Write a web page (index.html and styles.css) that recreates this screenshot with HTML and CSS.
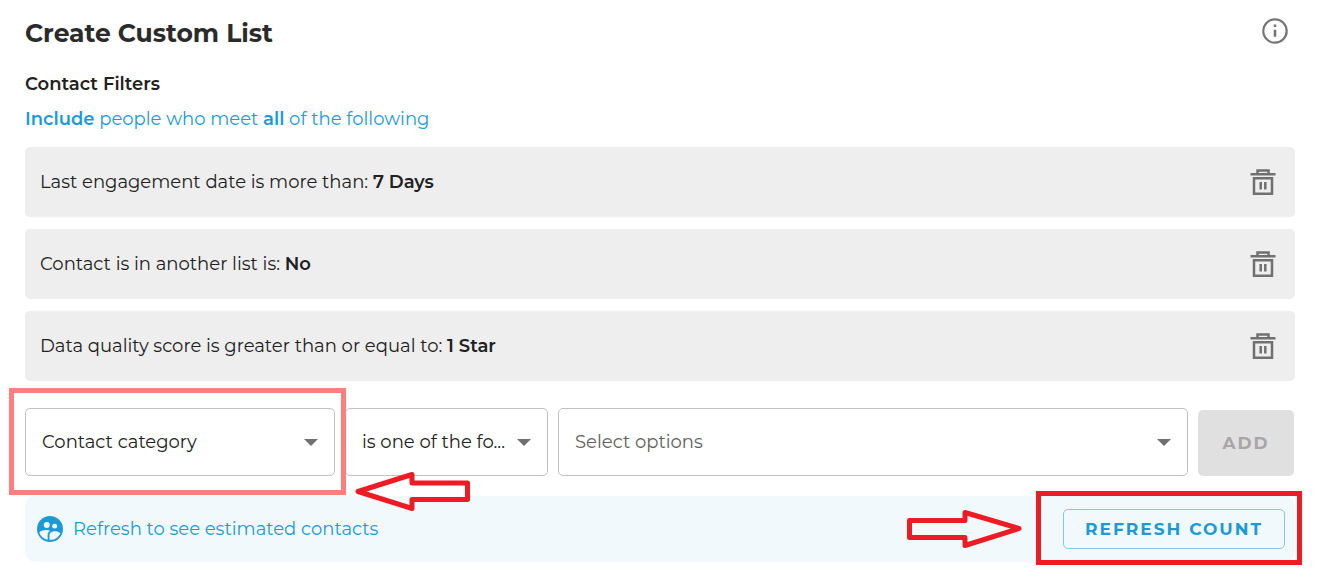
FILE: index.html
```html
<!DOCTYPE html>
<html lang="en">
	<head>
		<meta charset="utf-8" />
		<title>Create Custom List</title>
		<meta name="viewport" content="width=device-width, initial-scale=1" />
		<link rel="stylesheet" href="styles.css">
	</head>
	<body>
		<svg class="symbols" aria-hidden="true">
			<symbol id="trash" viewBox="0 0 26 26">
				<path d="M0.5 5.3H25.5M7.500 5V1.500H18.500V5M4 9.200H22V24.700H4ZM10.700 13V20.500M15.300 13V20.500" fill="none" stroke="#707070" stroke-width="2.5" />
			</symbol>
		</svg>
		<main>
			<header>
				<h1>Create Custom List</h1>
				<button class="icon-button" aria-label="Info">
					<svg width="26" height="26" viewBox="0 0 26 26">
						<circle cx="13" cy="13" r="11.7" fill="none" stroke="#757575" stroke-width="2.2" />
						<path d="M11.7 6.5h2.6v2.6h-2.6zM11.7 11.7h2.6v7h-2.6z" fill="#757575" />
					</svg>
				</button>
			</header>
			<h2>Contact Filters</h2>
			<p class="summary"><strong>Include</strong> people who meet <strong>all</strong> of the following</p>

			<ul class="filters">
				<li>
					<span>Last engagement date is more than: <strong>7 Days</strong></span>
					<button class="icon-button" aria-label="Delete filter"><svg width="26" height="26"><use href="#trash" /></svg></button>
				</li>
				<li>
					<span>Contact is in another list is: <strong>No</strong></span>
					<button class="icon-button" aria-label="Delete filter"><svg width="26" height="26"><use href="#trash" /></svg></button>
				</li>
				<li>
					<span>Data quality score is greater than or equal to: <strong>1 Star</strong></span>
					<button class="icon-button" aria-label="Delete filter"><svg width="26" height="26"><use href="#trash" /></svg></button>
				</li>
			</ul>

			<form class="builder">
				<div class="field">
					<select aria-label="Filter">
						<option>Contact category</option>
					</select>
					<span class="caret"></span>
					<span class="mark mark-category"></span>
					<svg class="arrow arrow-left" width="116" height="40" viewBox="0 0 116 40">
						<path d="M3 20.500L57 3.500V12H112.500V28.500H57V37.500Z" />
					</svg>
				</div>
				<div class="field">
					<select aria-label="Condition">
						<option>is one of the fo...</option>
					</select>
					<span class="caret"></span>
				</div>
				<div class="field options">
					<select aria-label="Options">
						<option>Select options</option>
					</select>
					<span class="caret"></span>
				</div>
				<button class="add" type="button" disabled>ADD</button>
			</form>

			<div class="estimate">
				<svg width="26" height="26" viewBox="2 2 20 20">
					<circle cx="12" cy="12" r="10" fill="#1c9ad6" />
					<g fill="#f1f9fd">
						<circle cx="9.500" cy="9" r="2.300" />
						<circle cx="15.600" cy="9.800" r="1.900" />
						<path d="M3.800 14.500C5.200 13.200 7.600 12.700 9.500 12.800C10.500 12.900 11.400 13.100 12 13.400C10.700 14.300 10.200 15.500 10.200 16.600V20.200C6.900 19.600 4.600 17.500 3.800 14.500Z" />
						<path d="M11.600 20.300V16.700C11.600 14.700 14 13.800 15.700 13.800C17.100 13.800 18.900 14.300 20 15.200C18.800 18.200 15.700 20.500 11.600 20.300Z" />
					</g>
				</svg>
				<span>Refresh to see estimated contacts</span>
				<div class="refresh">
					<button type="button">REFRESH COUNT</button>
					<span class="mark mark-refresh"></span>
					<svg class="arrow arrow-right" width="116" height="40" viewBox="0 0 116 40">
						<path d="M113 19.500L59 3.500V11.500H3.500V28.500H59V36.500Z" />
					</svg>
				</div>
			</div>
		</main>
	</body>
</html>
```

FILE: styles.css
```css
* {
	box-sizing: border-box;
}

body {
	background: #ffffff;
	color: #212121;
	font-family: Montserrat, Inter, sans-serif;
	font-size: 18px;
	line-height: 24px;
	margin: 0;
}

main {
	padding: 16px 28px 16px 25px;
}

strong {
	font-weight: 600;
}

button,
select {
	font: inherit;
}

.symbols {
	display: none;
}

header {
	align-items: flex-start;
	display: flex;
	justify-content: space-between;
	padding: 2px 7px 0 0;
}

h1 {
	color: #2b2b2b;
	font-size: 25px;
	font-weight: 700;
	line-height: 30px;
	margin: 0;
}

h2 {
	font-size: 18px;
	font-weight: 600;
	line-height: 24px;
	margin: 24px 0 0;
}

.icon-button {
	background: none;
	border: 0;
	display: flex;
	padding: 0;
}

.summary {
	color: #1c9ad6;
	margin: 11px 0 16px;
}

.filters {
	display: grid;
	gap: 12px;
	list-style: none;
	margin: 0;
	padding: 0;
}

.filters li {
	align-items: center;
	background: #eeeeee;
	border-radius: 5px;
	display: flex;
	height: 70px;
	justify-content: space-between;
	padding: 0 19px 0 15px;
}

.builder {
	display: grid;
	gap: 10px;
	grid-template-columns: 310px 203px 1fr 96px;
	margin: 27px 1px 20px 0;
}

.field {
	position: relative;
}

.field select {
	appearance: none;
	background: #ffffff;
	border: 1px solid #c0c0c0;
	border-radius: 5px;
	color: inherit;
	height: 68px;
	padding: 0 16px;
	width: 100%;
}

.options select {
	color: #616161;
}

.caret {
	border: 7px solid transparent;
	border-bottom: 0;
	border-top-color: #707070;
	pointer-events: none;
	position: absolute;
	right: 17px;
	top: 31px;
}

.add,
.refresh button {
	border-radius: 5px;
	font-size: 17px;
	font-weight: 700;
	letter-spacing: 2px;
}

.add {
	background: #e0e0e0;
	border: 0;
	color: #a6a6a6;
	margin-top: 2px;
}

.estimate {
	align-items: center;
	background: #f1f9fd;
	border-radius: 10px;
	color: #1c9ad6;
	display: flex;
	gap: 10px;
	height: 66px;
	padding: 0 10px 0 12px;
}

.refresh {
	margin-left: auto;
	position: relative;
}

.refresh button {
	background: none;
	border: 1px solid #82c8e8;
	color: #1c9ad6;
	display: block;
	height: 40px;
	padding: 0;
	width: 222px;
}

/* callouts drawn over the form */
.mark {
	border: 5px solid #ed1c24;
	pointer-events: none;
	position: absolute;
	z-index: 1;
}

.mark-category {
	border-color: #ff7f7f;
	inset: -20px -11px -19px -16px;
}

.mark-refresh {
	inset: -18px -17px -16px -27px;
}

.arrow {
	fill: none;
	pointer-events: none;
	position: absolute;
	stroke: #ed1c24;
	stroke-linejoin: round;
	stroke-width: 5px;
	z-index: 1;
}

.arrow-left {
	left: 330px;
	top: 63px;
}

.arrow-right {
	right: 263px;
	top: 0;
}
```
